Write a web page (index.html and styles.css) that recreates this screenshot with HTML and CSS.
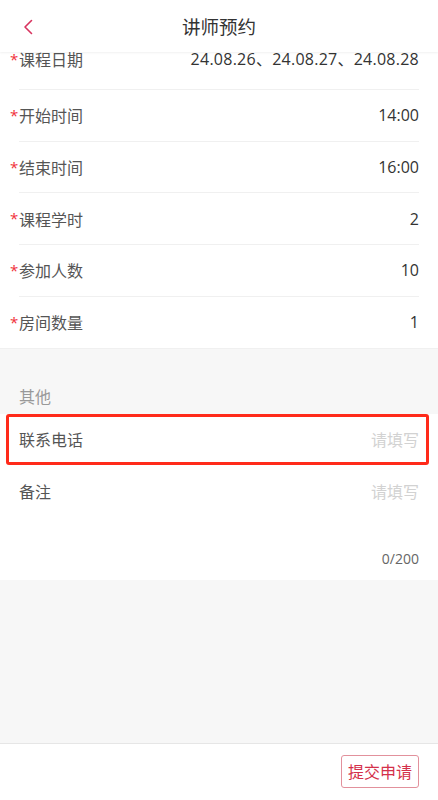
FILE: index.html
```html
<!DOCTYPE html>
<html lang="zh">
<head>
<meta charset="utf-8">
<title>讲师预约</title>
<link rel="stylesheet" href="styles.css">
</head>
<body>
<div class="page">
  <header class="nav">
    <span class="back">
      <svg width="12" height="16" viewBox="0 0 12 16"><path d="M9.5 1.5 L3 8 L9.5 14.5" fill="none" stroke="#d8345f" stroke-width="1.6" stroke-linecap="round" stroke-linejoin="round"/></svg>
    </span>
    <h1 class="title">讲师预约</h1>
  </header>
  <main class="main">
    <section class="group">
      <div class="row first"><span class="req">*</span><div class="cell"><span class="label">课程日期</span><span class="value wide">24.08.26、24.08.27、24.08.28</span></div></div>
      <div class="row"><span class="req">*</span><div class="cell"><span class="label">开始时间</span><span class="value">14:00</span></div></div>
      <div class="row"><span class="req">*</span><div class="cell"><span class="label">结束时间</span><span class="value">16:00</span></div></div>
      <div class="row"><span class="req">*</span><div class="cell"><span class="label">课程学时</span><span class="value">2</span></div></div>
      <div class="row"><span class="req">*</span><div class="cell"><span class="label">参加人数</span><span class="value">10</span></div></div>
      <div class="row last"><span class="req">*</span><div class="cell"><span class="label">房间数量</span><span class="value">1</span></div></div>
    </section>
    <div class="group-title">其他</div>
    <section class="group">
      <div class="row plain highlight"><div class="cell"><span class="label">联系电话</span><span class="placeholder">请填写</span></div><span class="mark"></span></div>
      <div class="remark">
        <div class="remark-head"><span class="label">备注</span><span class="placeholder">请填写</span></div>
        <div class="counter">0/200</div>
      </div>
    </section>
  </main>
  <footer class="footer">
    <button class="submit">提交申请</button>
  </footer>
</div>
</body>
</html>
```
FILE: styles.css
```css
* { box-sizing: border-box; }
html, body { margin: 0; padding: 0; }
body {
  font-family: "Open Sans", "Noto Sans CJK SC", sans-serif;
  font-size: 16px;
  color: #333;
  background: #f7f7f7;
}
.page {
  height: 100vh;
  display: flex;
  flex-direction: column;
}
.nav {
  position: relative;
  z-index: 2;
  height: 52px;
  flex: none;
  background: #fff;
  display: flex;
  align-items: center;
  justify-content: center;
  box-shadow: 0 1px 2px rgba(0,0,0,0.06);
}
.back {
  position: absolute;
  left: 22px;
  top: 19px;
  width: 12px;
  height: 16px;
  display: flex;
}
.title {
  margin: 0;
  font-family: "Noto Sans CJK SC", sans-serif;
  font-weight: 400;
  font-size: 18.5px;
  line-height: 24px;
  color: #333;
}
.main {
  flex: 1;
  overflow: hidden;
  background: #f7f7f7;
}
.group {
  background: #fff;
}
.row {
  position: relative;
  display: flex;
  padding-left: 10px;
  padding-right: 19px;
}
.row.plain { padding-left: 19px; }
.req {
  width: 9px;
  flex: none;
  color: #f0303a;
  font-size: 15px;
  line-height: 51px;
}
.cell {
  flex: 1;
  height: 51.65px;
  display: flex;
  align-items: center;
  justify-content: space-between;
  border-bottom: 1px solid #f0f0f0;
  line-height: 22px;
}
.row.last .cell { border-bottom: none; }
.row.first { margin-top: -14px; }
.row.first .req { line-height: 42px; }
.row.first .cell {
  height: 52px;
  align-items: flex-start;
  padding-top: 10px;
}
.label {
  font-family: "Noto Sans CJK SC", sans-serif;
  color: #555;
}
.value {
  color: #333;
}
.value.wide {
  letter-spacing: 0.25px;
}
.placeholder {
  font-family: "Noto Sans CJK SC", sans-serif;
  color: #d2d2d2;
}
.group-title {
  padding: 36px 19px 7px;
  line-height: 22px;
  color: #999;
  font-family: "Noto Sans CJK SC", sans-serif;
  border-top: 1px solid #f0f0f0;
}
.highlight .cell { height: 51px; }
.mark {
  position: absolute;
  left: 6px;
  right: 9px;
  top: 0;
  bottom: 0;
  border: 3px solid #ff2a1a;
  border-radius: 3px;
}
.remark {
  padding: 15px 19px 11px;
  display: flex;
  flex-direction: column;
}
.remark-head {
  display: flex;
  justify-content: space-between;
  line-height: 22px;
}
.counter {
  margin-top: 47px;
  text-align: right;
  font-size: 14px;
  line-height: 20px;
  color: #666;
}
.footer {
  flex: none;
  height: 57px;
  background: #fff;
  border-top: 1px solid #e6e6e6;
  display: flex;
  justify-content: flex-end;
  align-items: flex-start;
  padding: 11px 19px 0;
}
.submit {
  height: 33px;
  padding: 0 6px;
  border: 1px solid #e2919c;
  border-radius: 3px;
  background: #fff;
  color: #d4304a;
  font-family: "Noto Sans CJK SC", sans-serif;
  font-size: 16px;
  line-height: 31px;
}
```
